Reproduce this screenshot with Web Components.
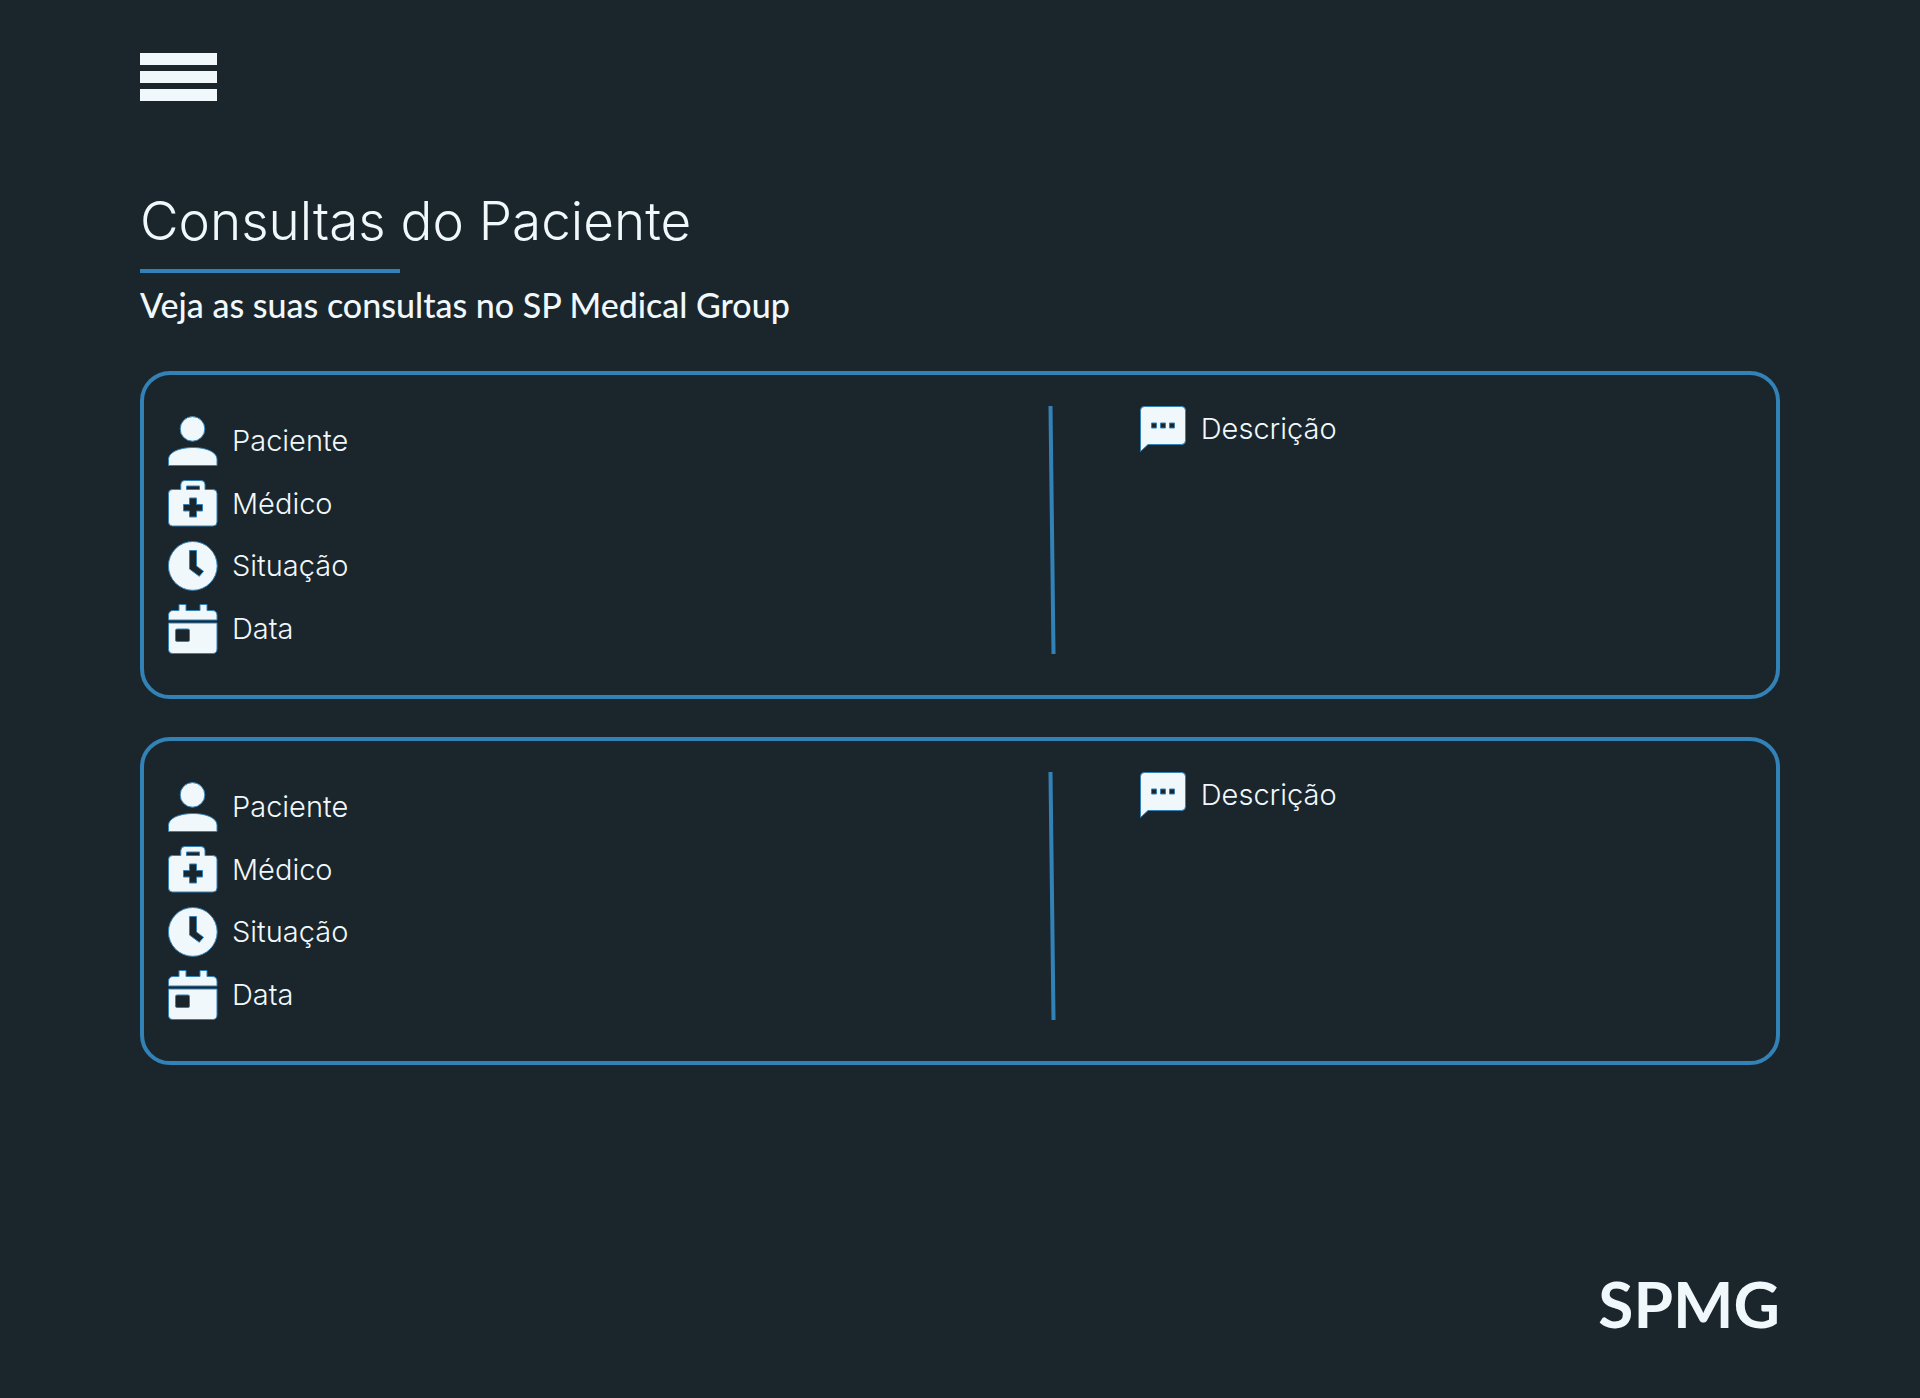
<!DOCTYPE html>
<html lang="pt-BR">
<head>
<meta charset="utf-8">
<meta name="viewport" content="width=device-width, initial-scale=1">
<title>Consultas do Paciente</title>
<style>
  :root {
    --bg: #1b262c;
    --light: #f0f8fc;
    --blue: #3282b8;
  }
  body {
    margin: 0;
    background: var(--bg);
    color: var(--light);
    font-family: Inter, "Noto Sans", sans-serif;
  }
</style>
</head>
<body>
<spmg-page>
  <menu-button slot="menu"></menu-button>
  <page-heading>
    Consultas do Paciente
    <span slot="subtitle">Veja as suas consultas no SP Medical Group</span>
  </page-heading>
  <consulta-card></consulta-card>
  <consulta-card></consulta-card>
  <span slot="brand">SPMG</span>
</spmg-page>

<script>
const define = (name, html) => {
  const template = document.createElement('template');
  template.innerHTML = html;
  customElements.define(name, class extends HTMLElement {
    constructor() {
      super();
      this.attachShadow({ mode: 'open' }).append(template.content.cloneNode(true));
    }
  });
};

define('spmg-page', `
  <style>
    :host { display: flex; flex-direction: column; min-height: 100vh; box-sizing: border-box; padding: 53px 140px 62px; }
    main { display: flex; flex-direction: column; gap: 38px; margin-top: 90px; }
    footer { margin-top: auto; text-align: right; font: 700 64px/64px Lato, sans-serif; }
  </style>
  <header><slot name="menu"></slot></header>
  <main><slot></slot></main>
  <footer><slot name="brand"></slot></footer>
`);

define('menu-button', `
  <style>
    :host { display: block; }
    button { display: flex; flex-direction: column; gap: 6px; width: 77px; padding: 0; border: 0; background: none; cursor: pointer; }
    i { height: 12px; width: 100%; background: var(--light); }
  </style>
  <button type="button" aria-label="Menu"><i></i><i></i><i></i></button>
`);

define('page-heading', `
  <style>
    :host { display: block; }
    h1 { margin: 0; font-weight: 300; font-size: 53px; line-height: 60px; }
    hr { width: 260px; height: 4px; margin: 18px 0 10px; border: 0; background: var(--blue); }
    p { margin: 0 0 6px; font: 500 34px/44px Lato, sans-serif; }
  </style>
  <h1><slot></slot></h1>
  <hr>
  <p><slot name="subtitle"></slot></p>
`);

define('info-item', `
  <style>
    :host { display: flex; align-items: center; gap: 14px; font-weight: 300; font-size: 29px; line-height: 32px; }
  </style>
  <slot name="icon"></slot>
  <span><slot></slot></span>
`);

define('consulta-card', `
  <style>
    :host { display: grid; grid-template-columns: 884fr 4px 700fr; border: 4px solid var(--blue); border-radius: 30px; padding: 31px 24px 41px; }
    .facts { display: flex; flex-direction: column; gap: 13px; padding-top: 10px; }
    .rule { background: var(--blue); transform: rotate(-0.7deg); }
    .description { padding-left: 86px; }
    svg { display: block; flex: none; fill: var(--light); stroke: var(--blue); stroke-width: 1; }
    .hole { fill: var(--bg); }
  </style>
  <div class="facts">
    <info-item>
      <svg slot="icon" width="50" height="50" viewBox="0 0 50 50" aria-hidden="true">
        <circle cx="24.5" cy="12.9" r="12.3"/>
        <path d="M.5 49.5V43.500C.5 35.500 13 31.500 25 31.500S49 35.500 49 43.500V49.500Z"/>
      </svg>
      Paciente
    </info-item>
    <info-item>
      <svg slot="icon" width="50" height="49" viewBox="0 0 50 49" aria-hidden="true">
        <path d="M4.500 10.500H12.800V5.500Q12.800 1.500 16.800 1.500H33Q37 1.500 37 5.500V10.500H45Q49 10.500 49 14.500V43Q49 47 45 47H4.500Q.5 47 .5 43V14.500Q.5 10.500 4.500 10.500Z"/>
        <path class="hole" d="M18.500 7H31.500V10.500H18.500ZM21.500 19H28.500V25.500H34.500V32H28.500V38H21.500V32H15.500V25.500H21.500Z"/>
      </svg>
      Médico
    </info-item>
    <info-item>
      <svg slot="icon" width="50" height="50" viewBox="0 0 50 50" aria-hidden="true">
        <circle cx="24.8" cy="24.900" r="24.400"/>
        <path class="hole" d="M21.500 9.500H28.500V25L35.500 30.300L31.300 35.300L21.500 28Z"/>
      </svg>
      Situação
    </info-item>
    <info-item>
      <svg slot="icon" width="50" height="50" viewBox="0 0 50 50" aria-hidden="true">
        <path d="M.5 16V11.500Q.5 6.500 5.500 6.500H11V.5H18V6.500H32V.5H39V6.500H44Q49 6.500 49 11.500V16Z"/>
        <path d="M.5 19H49V45Q49 49.500 44.500 49.500H5Q.5 49.500 .5 45Z"/>
        <rect class="hole" x="7.500" y="25" width="14" height="12.500" rx="1.500"/>
      </svg>
      Data
    </info-item>
  </div>
  <div class="rule"></div>
  <div class="description">
    <info-item>
      <svg slot="icon" width="47" height="46" viewBox="0 0 47 46" aria-hidden="true">
        <path d="M4.500 .5H41.500Q45.500 .5 45.500 4.500V34.500Q45.500 38.500 41.500 38.500H8L.5 45.500V4.500Q.5 .5 4.500 .5Z"/>
        <path class="hole" d="M11.500 17H16.500V22H11.500ZM20.500 17H25.500V22H20.500ZM29.500 17H34.500V22H29.500Z"/>
      </svg>
      Descrição
    </info-item>
  </div>
`);
</script>
</body>
</html>
